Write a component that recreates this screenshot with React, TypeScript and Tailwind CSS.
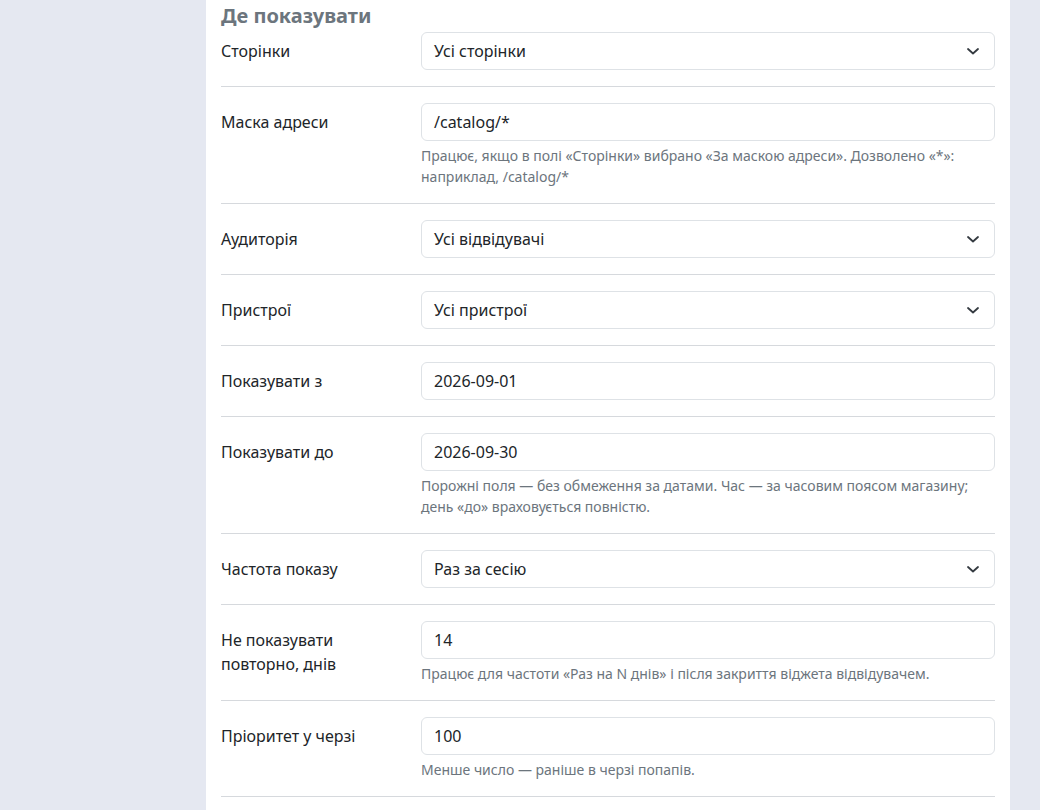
import React from "react";

type Field = {
  label: string;
  kind: "select" | "input";
  value: string;
  help?: string[];
};

const fields: Field[] = [
  { label: "Сторінки", kind: "select", value: "Усі сторінки" },
  {
    label: "Маска адреси",
    kind: "input",
    value: "/catalog/*",
    help: [
      "Працює, якщо в полі «Сторінки» вибрано «За маскою адреси». Дозволено «*»:",
      "наприклад, /catalog/*",
    ],
  },
  { label: "Аудиторія", kind: "select", value: "Усі відвідувачі" },
  { label: "Пристрої", kind: "select", value: "Усі пристрої" },
  { label: "Показувати з", kind: "input", value: "2026-09-01" },
  {
    label: "Показувати до",
    kind: "input",
    value: "2026-09-30",
    help: [
      "Порожні поля — без обмеження за датами. Час — за часовим поясом магазину;",
      "день «до» враховується повністю.",
    ],
  },
  { label: "Частота показу", kind: "select", value: "Раз за сесію" },
  {
    label: "Не показувати повторно, днів",
    kind: "input",
    value: "14",
    help: ["Працює для частоти «Раз на N днів» і після закриття віджета відвідувачем."],
  },
  {
    label: "Пріоритет у черзі",
    kind: "input",
    value: "100",
    help: ["Менше число — раніше в черзі попапів."],
  },
];

function Chevron() {
  return (
    <svg width="12" height="7" viewBox="0 0 12 7" fill="none" className="shrink-0">
      <path d="M1 1l5 4.5L11 1" stroke="#343a40" strokeWidth="1.8" strokeLinecap="round" strokeLinejoin="round" />
    </svg>
  );
}

function Row({ field, first }: { field: Field; first: boolean }) {
  return (
    <div className={`flex border-b border-[#d6d9dd] ${first ? "pt-0 pb-4" : "py-4"}`}>
      {/* label column */}
      <div className="w-[200px] shrink-0 pt-[7px] pr-4 text-base leading-6 text-[#212529]">
        {field.label === "Не показувати повторно, днів" ? (
          <>
            Не показувати
            <br />
            повторно, днів
          </>
        ) : (
          field.label
        )}
      </div>

      {/* control column */}
      <div className="flex-1 min-w-0">
        <div className="h-[38px] flex items-center justify-between rounded-md border border-[#dee2e6] bg-white pl-3 pr-[15px] text-base text-[#212529]">
          <span>{field.value}</span>
          {field.kind === "select" && <Chevron />}
        </div>
        {field.help && (
          <div className="mt-1 text-sm leading-[21px] text-[#6c757d]">
            {field.help.map((line) => (
              <div key={line}>{line}</div>
            ))}
          </div>
        )}
      </div>
    </div>
  );
}

export default function App() {
  return (
    <div
      className="min-h-screen w-full bg-[#e5e8f1]"
      style={{ fontFamily: '"Noto Sans", "Open Sans", sans-serif' }}
    >
      <div className="ml-[206px] w-[804px] bg-white px-[15px] min-h-[810px]">
        {/* section header */}
        <h2 className="h-8 flex items-center text-xl font-bold text-[#6c757d]">Де показувати</h2>

        {fields.map((f, i) => (
          <Row key={f.label} field={f} first={i === 0} />
        ))}
      </div>
    </div>
  );
}
